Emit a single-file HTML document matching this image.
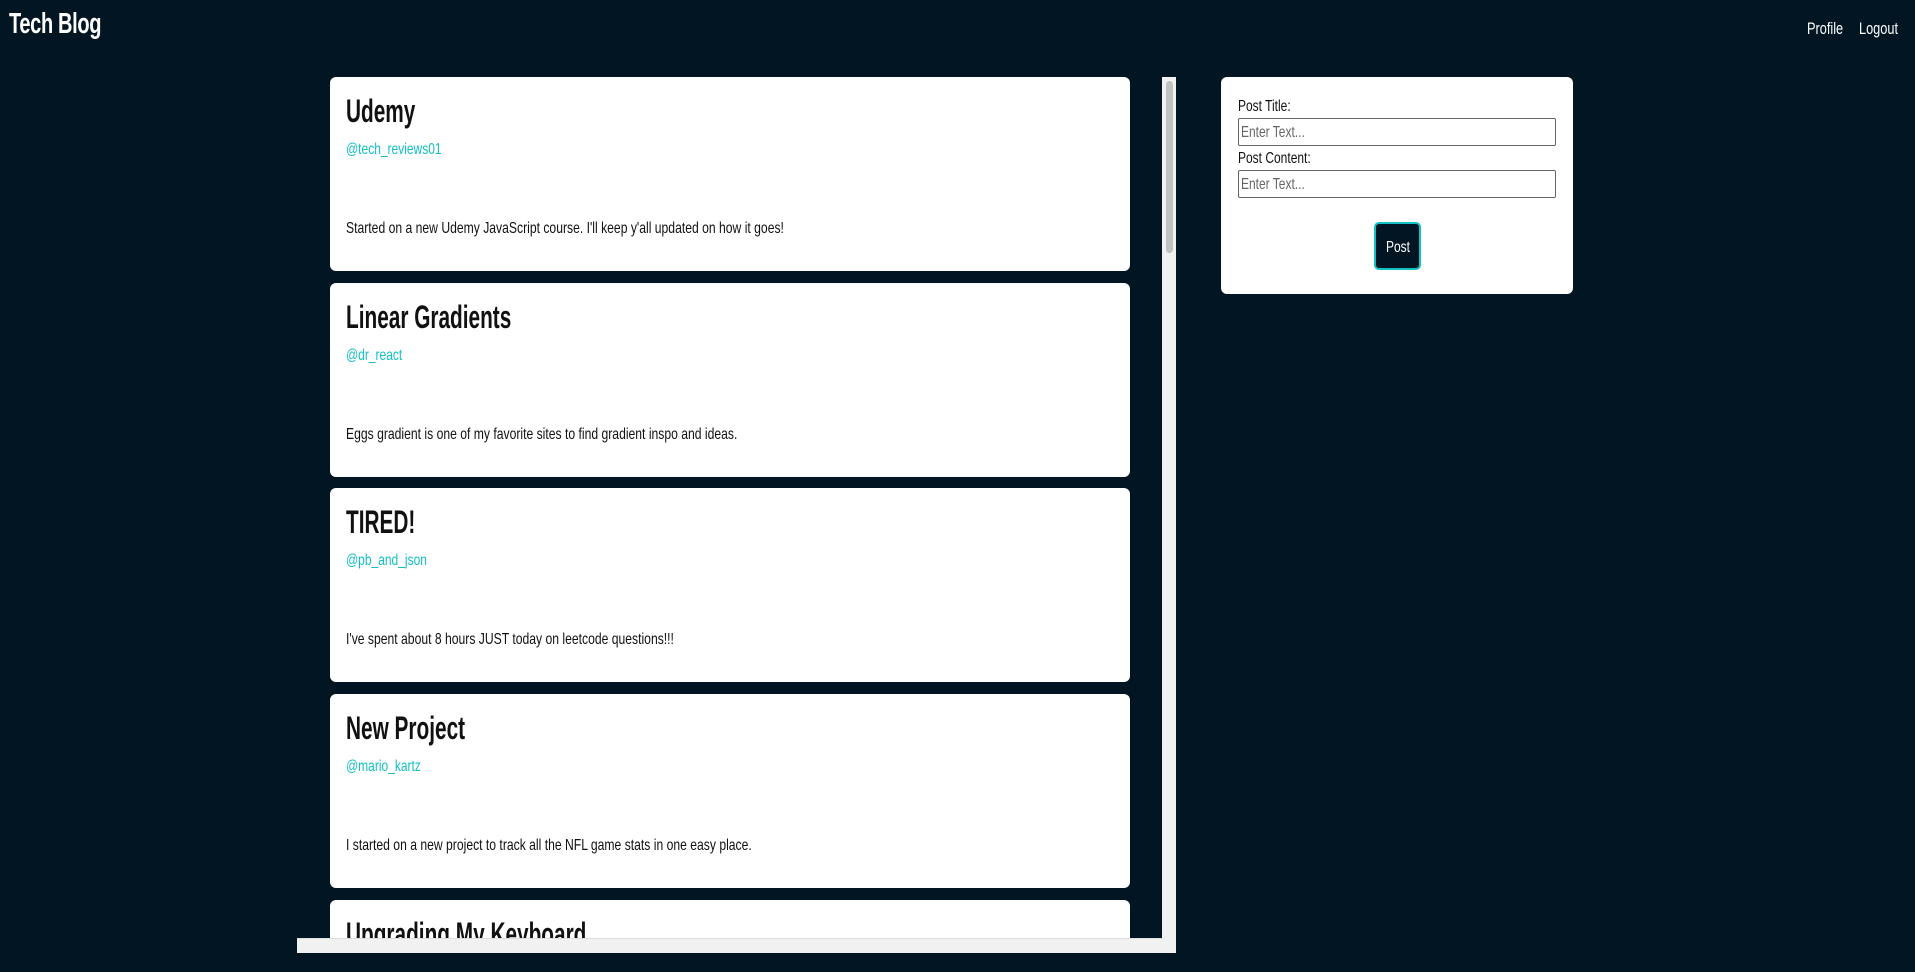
<!DOCTYPE html>
<html><head><meta charset="utf-8"><style>
*{box-sizing:border-box;margin:0;padding:0}
html,body{width:1915px;height:972px;overflow:hidden}
body{background:#021522;font-family:"Liberation Sans",sans-serif;position:relative}
.n{display:inline-block;transform:scaleX(0.75);transform-origin:0 0;white-space:nowrap}
.logo{position:absolute;left:9px;top:8px;color:#fff;font-weight:bold;font-size:29px;letter-spacing:-0.5px}
.logo .n{transform:scaleX(0.69)}
.nav{position:absolute;top:19px;color:#fff;font-size:17px}
.scroll{position:absolute;left:297px;top:77px;width:879px;height:876px;overflow:hidden}
.vbar{position:absolute;left:865px;top:0;width:14px;height:876px;background:#f1f1f1}
.vthumb{position:absolute;left:4px;top:4px;width:7px;height:172px;background:#c1c1c1;border-radius:4px}
.hbar{position:absolute;left:0;top:861px;width:865px;height:15px;background:#f1f1f1;border-top:1px solid #ddd}
.card{position:absolute;left:33px;width:800px;height:194px;background:#fff;border-radius:6px}
.card h2{position:absolute;left:16px;top:16px;font-size:32px;font-weight:bold;color:#111}
.card h2 .n{transform:scaleX(0.65)}
.card .u{position:absolute;left:16px;top:64px;font-size:16px;color:#13c0c4}
.card p{position:absolute;left:16px;top:143px;font-size:16px;color:#111}
.card p .n{transform:scaleX(0.76)}
.form{position:absolute;left:1221px;top:77px;width:352px;height:217px;background:#fff;border-radius:6px}
.lab{position:absolute;left:17px;font-size:16px;color:#111}
.inp{position:absolute;left:17px;width:318px;height:28px;border:1px solid #666;border-radius:2px;font-size:16px;color:#666;padding:5px 2px}
.btn{position:absolute;left:153px;top:145px;width:47px;height:48px;background:#021522;border:2px solid #13c0c4;border-radius:5px;color:#fff;font-size:16px;line-height:47px;padding-left:10px}
</style></head><body>
<div class="logo"><span class="n">Tech Blog</span></div>
<div class="nav" style="left:1807px"><span class="n">Profile</span></div>
<div class="nav" style="left:1859px"><span class="n">Logout</span></div>
<div class="scroll">
<div class="card" style="top:0"><h2><span class="n">Udemy</span></h2><div class="u"><span class="n">@tech_reviews01</span></div><p><span class="n">Started on a new Udemy JavaScript course. I'll keep y'all updated on how it goes!</span></p></div>
<div class="card" style="top:206px"><h2><span class="n">Linear Gradients</span></h2><div class="u"><span class="n">@dr_react</span></div><p><span class="n">Eggs gradient is one of my favorite sites to find gradient inspo and ideas.</span></p></div>
<div class="card" style="top:411px"><h2><span class="n">TIRED!</span></h2><div class="u"><span class="n">@pb_and_json</span></div><p><span class="n">I've spent about 8 hours JUST today on leetcode questions!!!</span></p></div>
<div class="card" style="top:617px"><h2><span class="n">New Project</span></h2><div class="u"><span class="n">@mario_kartz</span></div><p><span class="n">I started on a new project to track all the NFL game stats in one easy place.</span></p></div>
<div class="card" style="top:823px"><h2><span class="n">Upgrading My Keyboard</span></h2></div>
<div class="vbar"><div class="vthumb"></div></div>
<div class="hbar"></div>
</div>
<div class="form">
<div class="lab" style="top:21px"><span class="n">Post Title:</span></div>
<div class="inp" style="top:41px"><span class="n">Enter Text...</span></div>
<div class="lab" style="top:73px"><span class="n">Post Content:</span></div>
<div class="inp" style="top:93px"><span class="n">Enter Text...</span></div>
<div class="btn"><span class="n">Post</span></div>
</div>
</body></html>
